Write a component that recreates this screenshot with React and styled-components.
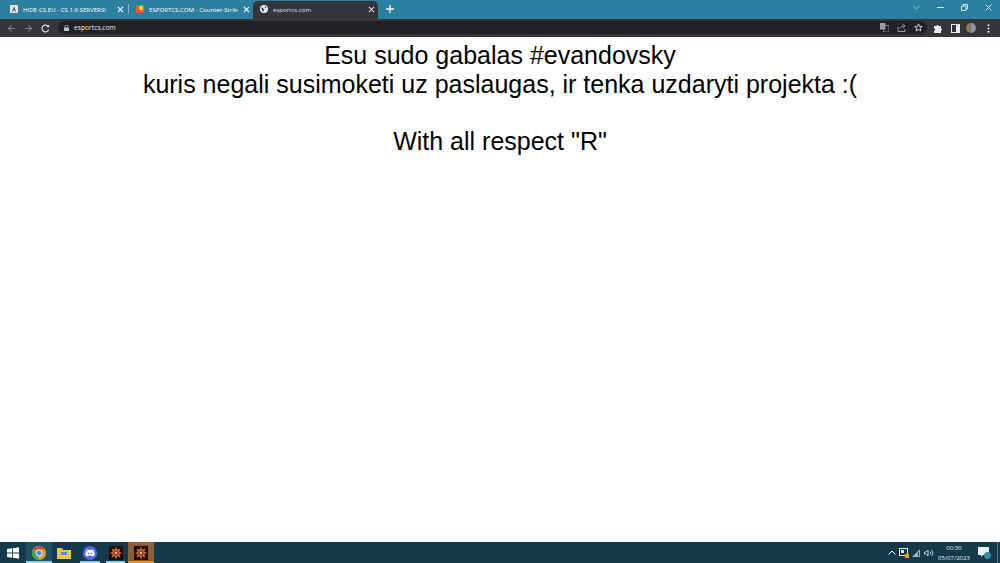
import React from 'react';
import styled, { createGlobalStyle } from 'styled-components';
import { FaDiscord } from 'react-icons/fa';

const Global = createGlobalStyle`
    html, body { margin: 0; padding: 0; background: #fff; }
    body { font-family: "Liberation Sans", Arial, sans-serif; overflow: hidden; }
`

const Screen = styled.div`
    width: 1000px;
    height: 563px;
    display: flex;
    flex-direction: column;
    overflow: hidden;
`

const TabStrip = styled.div`
    height: 19px;
    flex: none;
    background: #2b7f9f;
    display: flex;
    align-items: flex-end;
    padding-left: 3px;
`

const Tab = styled.div`
    width: ${props => props.width}px;
    height: 18px;
    padding: 0 3px 2px 7px;
    flex: none;
    display: flex;
    align-items: center;
    gap: 5px;
    box-sizing: border-box;
    border-radius: 5px 5px 0 0;
    background: ${props => props.active ? '#35363a' : 'transparent'};
    color: ${props => props.active ? '#dfe1e5' : '#ffffff'};
    font-family: "Open Sans", sans-serif;
    font-size: 6.1px;
    white-space: nowrap;
`

const TabTitle = styled.span`
    flex: 1;
    min-width: 0;
    overflow: hidden;
`

const TabDivider = styled.div`
    width: 1px;
    height: 10px;
    margin: 0 0 5px 1px;
    flex: none;
    background: #7fb4c8;
`

const TabClose = styled.svg`
    width: 7px;
    height: 7px;
    flex: none;
`

const NewTab = styled.div`
    width: 24px;
    height: 18px;
    padding-bottom: 2px;
    box-sizing: border-box;
    display: flex;
    align-items: center;
    justify-content: center;
    flex: none;
`

const WindowControls = styled.div`
    margin-left: auto;
    height: 15px;
    align-self: flex-start;
    display: flex;
    align-items: center;
    gap: 17px;
    padding-right: 8px;
`

const Toolbar = styled.div`
    height: 18px;
    flex: none;
    background: #35363a;
    display: flex;
    align-items: center;
    padding: 0 10.5px 0 7px;
    gap: 8px;
`

const NavIcon = styled.svg`
    width: 9px;
    height: 9px;
    flex: none;
`

const AddressBar = styled.div`
    flex: 1;
    height: 13px;
    margin: 0 -1.5px 1px 0;
    border-radius: 7px;
    background: #202124;
    display: flex;
    align-items: center;
    padding: 0 4.5px 0 6px;
    gap: 5px;
    color: #e8eaed;
    font-family: "Open Sans", sans-serif;
    font-size: 6.7px;
`

const AddressActions = styled.div`
    margin-left: auto;
    display: flex;
    align-items: center;
    gap: 8px;
`

const Avatar = styled.div`
    width: 10px;
    height: 10px;
    margin: 0 2.5px 0 -1.5px;
    border-radius: 50%;
    flex: none;
    background: linear-gradient(90deg, #8a7a5c 50%, #8d8fb8 50%);
`

const Page = styled.main`
    flex: 1;
    background: #fff;
    color: #000;
    text-align: center;
    font-size: 25px;
    line-height: 28.75px;
    padding-top: 4px;
`

const Taskbar = styled.div`
    height: 21px;
    flex: none;
    background: #14394b;
    display: flex;
    align-items: stretch;
`

const StartButton = styled.div`
    width: 26px;
    display: flex;
    align-items: center;
    justify-content: center;
`

const TaskItem = styled.div`
    width: 25.6px;
    position: relative;
    display: flex;
    align-items: center;
    justify-content: center;
    background: ${props => props.highlight ? '#8a5f3a' : props.active ? '#205064' : 'transparent'};

    &::after {
        content: '';
        position: absolute;
        bottom: 0;
        height: 2px;
        left: ${props => props.inset || 0}px;
        right: ${props => props.inset || 0}px;
        background: ${props => props.highlight ? '#f08a1d' : props.running ? '#8fd0e8' : 'transparent'};
    }
`

const DiscordBadge = styled.div`
    width: 14px;
    height: 14px;
    border-radius: 50%;
    background: #5865f2;
    color: #fff;
    display: flex;
    align-items: center;
    justify-content: center;
    font-size: 10px;
`

const Tray = styled.div`
    margin-left: auto;
    display: flex;
    align-items: center;
    gap: 3px;
    color: #fff;
`

const Clock = styled.div`
    width: 32px;
    margin: 0 4.5px 0 1px;
    text-align: center;
    font-family: "Open Sans", sans-serif;
    font-size: 6px;
    line-height: 10px;
    white-space: nowrap;
    color: #e4edf1;
`

const ShowDesktop = styled.div`
    width: 3px;
    align-self: stretch;
    margin-left: 3.5px;
    box-sizing: border-box;
    border-left: 1px solid #5c7a88;
`

const Close = ({ color = '#fff' }) => (
    <TabClose viewBox="0 0 8 8" fill="none" stroke={color} strokeWidth="1.2">
        <path d="M1 1l6 6M7 1L1 7" />
    </TabClose>
)

const GameIcon = () => (
    <svg width="14" height="14" viewBox="0 0 14 14">
        <rect width="14" height="14" fill="#1a0d08" />
        <path d="M7 .5l1.200 3.300L11.600 2.400 10.200 5.800 13.500 7l-3.300 1.200 1.400 3.400-3.400-1.400L7 13.500l-1.200-3.300-3.400 1.400 1.400-3.400L.5 7l3.300-1.200-1.400-3.400 3.400 1.400z" fill="#d9663a" />
        <circle cx="7" cy="7" r="2.600" fill="#8a3f22" />
        <circle cx="7" cy="7" r="1.200" fill="#f3c07f" />
    </svg>
)

const App = () => (
    <Screen>
        <Global />
        <TabStrip>
            <Tab width={124}>
                <svg width="8" height="8" viewBox="0 0 8 8">
                    <rect width="8" height="8" rx="1" fill="#e3e3e3" />
                    <path d="M2 6.500L4 1.500l2 5H5L4 4 3 6.500z" fill="#444" />
                </svg>
                <TabTitle>HIDE-CS.EU - CS 1.6 SERVERS!</TabTitle>
                <Close />
            </Tab>
            <TabDivider />
            <Tab width={124}>
                <svg width="8" height="8" viewBox="0 0 8 8">
                    <rect width="8" height="8" rx="1" fill="#e8632a" />
                    <rect x="3" y="1" width="4" height="4" fill="#f6c544" />
                </svg>
                <TabTitle>ESPORTCS.COM - Counter-Strike</TabTitle>
                <Close />
            </Tab>
            <Tab width={125} active>
                <svg width="8" height="8" viewBox="0 0 8 8">
                    <circle cx="4" cy="4" r="4" fill="#e8eaed" />
                    <path d="M1 2.500l2 .5 1 2-1 2zM4.500 1l2 1-1 1.500z" fill="#35363a" />
                </svg>
                <TabTitle>esportcs.com</TabTitle>
                <Close color="#dfe1e5" />
            </Tab>
            <NewTab>
                <svg width="8" height="8" viewBox="0 0 8 8" stroke="#fff" strokeWidth="1.3">
                    <path d="M4 0v8M0 4h8" />
                </svg>
            </NewTab>
            <WindowControls>
                <svg width="7" height="5" viewBox="0 0 7 5" fill="none" stroke="#9cc6d6" strokeWidth="1">
                    <path d="M.5 .8L3.500 4l3-3.200" />
                </svg>
                <svg width="7" height="7" viewBox="0 0 7 7" stroke="#d5e7ee" strokeWidth="1">
                    <path d="M0 3.500h7" />
                </svg>
                <svg width="7" height="7" viewBox="0 0 7 7" fill="none" stroke="#d5e7ee" strokeWidth="1">
                    <path d="M.5 2h4.500v4.500H.5zM2 2V.5h4.500V5H5" />
                </svg>
                <svg width="7" height="7" viewBox="0 0 7 7" stroke="#d5e7ee" strokeWidth="1">
                    <path d="M.5 .5l6 6M6.500 .5l-6 6" />
                </svg>
            </WindowControls>
        </TabStrip>
        <Toolbar>
            <NavIcon viewBox="0 0 10 10" fill="none" stroke="#7d7f83" strokeWidth="1.2">
                <path d="M9 5H1.500M5 1.500L1.500 5 5 8.500" />
            </NavIcon>
            <NavIcon viewBox="0 0 10 10" fill="none" stroke="#7d7f83" strokeWidth="1.2">
                <path d="M1 5h7.500M5 1.500L8.500 5 5 8.500" />
            </NavIcon>
            <NavIcon viewBox="0 0 10 10" fill="none" stroke="#dfe1e5" strokeWidth="1.3">
                <path d="M8.500 6.500A3.800 3.800 0 1 1 8 2.700" />
                <path d="M9 .5V3.500H6" fill="#dfe1e5" stroke="none" />
            </NavIcon>
            <AddressBar>
                <svg width="5" height="6" viewBox="0 0 5 6">
                    <rect y="2.500" width="5" height="3.500" rx=".5" fill="#c4c7cb" />
                    <path d="M1 2.500V1.700a1.500 1.500 0 0 1 3 0v.8" fill="none" stroke="#c4c7cb" strokeWidth=".8" />
                </svg>
                esportcs.com
                <AddressActions>
                    <svg width="9" height="9" viewBox="0 0 9 9">
                        <rect width="5.500" height="6.500" fill="#9a9c9f" />
                        <rect x="3.500" y="2.500" width="5.500" height="6.500" fill="none" stroke="#9a9c9f" strokeWidth=".8" />
                    </svg>
                    <svg width="9" height="9" viewBox="0 0 9 9" fill="none" stroke="#a9abae" strokeWidth=".9">
                        <path d="M1 4v4.500h7V6M3 5.500C3.500 3.500 5 3 6.500 3M5.500 1l2.500 2-2.500 2" />
                    </svg>
                    <svg width="9" height="9" viewBox="0 0 10 10" fill="none" stroke="#dfe1e5" strokeWidth="1">
                        <path d="M5 1l1.200 2.700 2.900.3-2.200 1.900.7 2.900L5 7.300 2.400 8.800l.7-2.900L.9 4l2.900-.3z" />
                    </svg>
                </AddressActions>
            </AddressBar>
            <svg width="9" height="9" viewBox="0 0 9 9" fill="#e8eaed">
                <path d="M0 2h2.500a1 1 0 0 1 2 0H7v2.500a1 1 0 0 1 0 2V9H0V6.800a1.200 1.200 0 0 0 0-2.400z" />
            </svg>
            <svg width="9" height="9" viewBox="0 0 9 9">
                <rect x=".5" y=".5" width="8" height="8" fill="none" stroke="#e8eaed" />
                <rect x="5" y="1" width="3" height="7" fill="#e8eaed" />
            </svg>
            <Avatar />
            <svg width="3" height="9" viewBox="0 0 3 9" fill="#e8eaed">
                <circle cx="1.500" cy="1.200" r="1" />
                <circle cx="1.500" cy="4.500" r="1" />
                <circle cx="1.500" cy="7.800" r="1" />
            </svg>
        </Toolbar>
        <Page>
            Esu sudo gabalas #evandovsky<br />
            kuris negali susimoketi uz paslaugas, ir tenka uzdaryti projekta :(<br />
            <br />
            With all respect "R"
        </Page>
        <Taskbar>
            <StartButton>
                <svg width="12" height="12" viewBox="0 0 12 12" fill="#fff">
                    <path d="M0 2l5-.7V5.600H0zM5.800 1.200L12 .3v5.300H5.800zM0 6.400h5v4.300l-5-.7zM5.800 6.400H12v5.300l-6.200-.9z" />
                </svg>
            </StartButton>
            <TaskItem active running>
                <svg width="14" height="14" viewBox="0 0 14 14">
                    <circle cx="7" cy="7" r="7" fill="#e0a52c" />
                    <path d="M7 0a7 7 0 0 1 6.100 3.500H7a3.500 3.500 0 0 0-3.300 2.300L1.500 2.600A7 7 0 0 1 7 0z" fill="#d9493c" />
                    <path d="M1.500 2.600L4.700 8.500 7 14A7 7 0 0 1 1.500 2.600z" fill="#3aa757" />
                    <circle cx="7" cy="7" r="3.300" fill="#fff" />
                    <circle cx="7" cy="7" r="2.500" fill="#4a8af4" />
                </svg>
            </TaskItem>
            <TaskItem>
                <svg width="14" height="12" viewBox="0 0 14 12">
                    <path d="M0 1h5l1 2h8v9H0z" fill="#f3c54c" />
                    <rect x="4" y="5" width="6" height="3" fill="#3f9ad6" />
                </svg>
            </TaskItem>
            <TaskItem running inset={3}>
                <DiscordBadge><FaDiscord /></DiscordBadge>
            </TaskItem>
            <TaskItem running inset={3}><GameIcon /></TaskItem>
            <TaskItem highlight><GameIcon /></TaskItem>
            <Tray>
                <svg width="8" height="5" viewBox="0 0 8 5" fill="none" stroke="#fff">
                    <path d="M.5 4.500L4 1l3.500 3.500" />
                </svg>
                <svg width="10" height="10" viewBox="0 0 10 10">
                    <rect x=".5" y=".5" width="8" height="7" fill="#14394b" stroke="#dfe7ea" />
                    <rect x="2" y="2" width="3" height="3" fill="#dfe7ea" />
                    <rect x="6" y="6" width="4" height="4" fill="#f39a1e" />
                </svg>
                <svg width="9" height="8" viewBox="0 0 9 8" fill="#9fb2bc">
                    <path d="M0 8L8 0v8zM3 8V7h4V3H6v4z" />
                </svg>
                <svg width="10" height="8" viewBox="0 0 10 8" fill="none" stroke="#e4edf1" strokeWidth=".8">
                    <path d="M.5 3v2h1.500L4 7V1L2 3zM6 2.500a2 2 0 0 1 0 3M7.500 1a4 4 0 0 1 0 6" />
                </svg>
                <Clock>00:30<br />05/07/2023</Clock>
                <svg width="13" height="13" viewBox="0 0 13 13">
                    <path d="M0 1h11v8H5l-2 2V9H0z" fill="#e8eef1" />
                    <circle cx="9.500" cy="9.500" r="3.500" fill="#3a88a8" />
                </svg>
                <ShowDesktop />
            </Tray>
        </Taskbar>
    </Screen>
)

export default App;
